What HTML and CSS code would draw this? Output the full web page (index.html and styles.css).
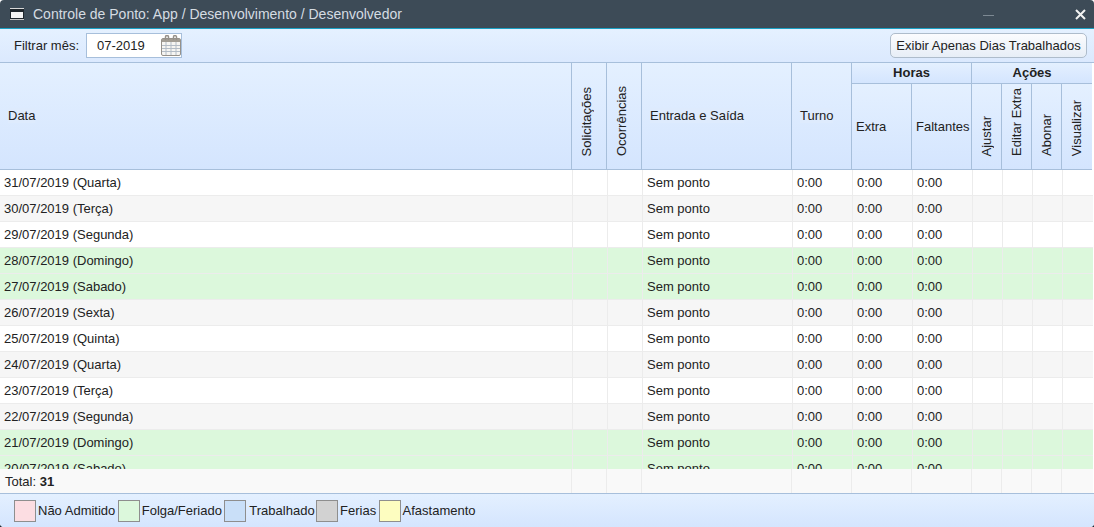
FILE: index.html
```html
<!DOCTYPE html>
<html lang="pt-BR">
<head>
    <meta charset="UTF-8">
    <title>Controle de Ponto</title>
    <link rel="stylesheet" href="styles.css">
</head>
<body>
<div class="window">
    <div class="titlebar">
        <svg class="title-icon" width="14" height="12" viewBox="0 0 14 12">
            <rect x="0" y="0" width="14" height="12" fill="#1f262c"/>
            <rect x="0" y="0" width="14" height="1" fill="#d8d8d8"/>
            <rect x="1" y="4" width="12" height="6" fill="#f4f4f4"/>
            <rect x="0" y="11" width="14" height="1" fill="#c4c4c4"/>
        </svg>
        <span class="title-text">Controle de Ponto: App / Desenvolvimento / Desenvolvedor</span>
        <span class="title-min"></span>
        <svg class="title-close" width="11" height="11" viewBox="0 0 11 11"><path d="M1 1 L10 10 M10 1 L1 10" stroke="#f2f2f2" stroke-width="2"/></svg>
    </div>

    <div class="toolbar">
        <label class="filter-label">Filtrar mês:</label>
        <div class="month-input">
            <span class="month-value">07-2019</span>
            <svg class="cal-icon" width="20" height="21" viewBox="0 0 20 21">
                <rect x="0.500" y="3.500" width="19" height="17" rx="1.500" fill="#f6f5f2" stroke="#96918a"/>
                <rect x="1" y="4" width="18" height="3" fill="#a29d94"/>
                <path d="M5 7v13M10 7v13M15 7v13M1 10.500h18M1 13.500h18M1 16.500h18" stroke="#b3bcc6" stroke-width="1"/>
                <path d="M4.500 5V2a1.500 1.500 0 0 1 3 0v3M12.500 5V2a1.500 1.500 0 0 1 3 0v3" fill="none" stroke="#96918a" stroke-width="1.500"/>
            </svg>
        </div>
        <button class="btn-days">Exibir Apenas Dias Trabalhados</button>
    </div>

    <table class="grid grid-head">
        <colgroup>
            <col class="c-data"><col class="c-v"><col class="c-v"><col class="c-es"><col class="c-h"><col class="c-h"><col class="c-h"><col class="c-a"><col class="c-a"><col class="c-a"><col class="c-end">
        </colgroup>
        <tr class="head-top">
            <th rowspan="2" class="th-left th-tall"><span class="lbl">Data</span></th>
            <th rowspan="2" class="th-rot"><span class="rot">Solicitações</span></th>
            <th rowspan="2" class="th-rot"><span class="rot">Ocorrências</span></th>
            <th rowspan="2" class="th-left th-tall"><span class="lbl">Entrada e Saída</span></th>
            <th rowspan="2" class="th-left th-tall"><span class="lbl">Turno</span></th>
            <th colspan="2" class="th-group">Horas</th>
            <th colspan="4" class="th-group th-end">Ações</th>
        </tr>
        <tr class="head-sub">
            <th class="th-left th-sm">Extra</th>
            <th class="th-left th-sm">Faltantes</th>
            <th class="th-rot"><span class="rot">Ajustar</span></th>
            <th class="th-rot"><span class="rot">Editar Extra</span></th>
            <th class="th-rot"><span class="rot">Abonar</span></th>
            <th class="th-rot th-end"><span class="rot">Visualizar</span></th>
        </tr>
    </table>

    <div class="rows">
        <table class="grid grid-body">
            <colgroup>
                <col class="c-data"><col class="c-v"><col class="c-v"><col class="c-es"><col class="c-h"><col class="c-h"><col class="c-h"><col class="c-a"><col class="c-a"><col class="c-a"><col class="c-last">
            </colgroup>
            <tr><td>31/07/2019 (Quarta)</td><td></td><td></td><td>Sem ponto</td><td>0:00</td><td>0:00</td><td>0:00</td><td></td><td></td><td></td><td></td></tr>
            <tr class="alt"><td>30/07/2019 (Terça)</td><td></td><td></td><td>Sem ponto</td><td>0:00</td><td>0:00</td><td>0:00</td><td></td><td></td><td></td><td></td></tr>
            <tr><td>29/07/2019 (Segunda)</td><td></td><td></td><td>Sem ponto</td><td>0:00</td><td>0:00</td><td>0:00</td><td></td><td></td><td></td><td></td></tr>
            <tr class="off"><td>28/07/2019 (Domingo)</td><td></td><td></td><td>Sem ponto</td><td>0:00</td><td>0:00</td><td>0:00</td><td></td><td></td><td></td><td></td></tr>
            <tr class="off"><td>27/07/2019 (Sabado)</td><td></td><td></td><td>Sem ponto</td><td>0:00</td><td>0:00</td><td>0:00</td><td></td><td></td><td></td><td></td></tr>
            <tr class="alt"><td>26/07/2019 (Sexta)</td><td></td><td></td><td>Sem ponto</td><td>0:00</td><td>0:00</td><td>0:00</td><td></td><td></td><td></td><td></td></tr>
            <tr><td>25/07/2019 (Quinta)</td><td></td><td></td><td>Sem ponto</td><td>0:00</td><td>0:00</td><td>0:00</td><td></td><td></td><td></td><td></td></tr>
            <tr class="alt"><td>24/07/2019 (Quarta)</td><td></td><td></td><td>Sem ponto</td><td>0:00</td><td>0:00</td><td>0:00</td><td></td><td></td><td></td><td></td></tr>
            <tr><td>23/07/2019 (Terça)</td><td></td><td></td><td>Sem ponto</td><td>0:00</td><td>0:00</td><td>0:00</td><td></td><td></td><td></td><td></td></tr>
            <tr class="alt"><td>22/07/2019 (Segunda)</td><td></td><td></td><td>Sem ponto</td><td>0:00</td><td>0:00</td><td>0:00</td><td></td><td></td><td></td><td></td></tr>
            <tr class="off"><td>21/07/2019 (Domingo)</td><td></td><td></td><td>Sem ponto</td><td>0:00</td><td>0:00</td><td>0:00</td><td></td><td></td><td></td><td></td></tr>
            <tr class="off"><td>20/07/2019 (Sabado)</td><td></td><td></td><td>Sem ponto</td><td>0:00</td><td>0:00</td><td>0:00</td><td></td><td></td><td></td><td></td></tr>
        </table>
    </div>

    <table class="grid grid-foot">
        <colgroup>
            <col class="c-data"><col class="c-v"><col class="c-v"><col class="c-es"><col class="c-h"><col class="c-h"><col class="c-h"><col class="c-a"><col class="c-a"><col class="c-a"><col class="c-last">
        </colgroup>
        <tr><td>Total: <b>31</b></td><td></td><td></td><td></td><td></td><td></td><td></td><td></td><td></td><td></td><td></td></tr>
    </table>

    <div class="legend">
        <span class="swatch sw-pink"></span><span class="legend-text">Não Admitido</span>
        <span class="swatch sw-green"></span><span class="legend-text">Folga/Feriado</span>
        <span class="swatch sw-blue"></span><span class="legend-text legend-tight">Trabalhado</span>
        <span class="swatch sw-gray"></span><span class="legend-text">Ferias</span>
        <span class="swatch sw-yellow"></span><span class="legend-text">Afastamento</span>
    </div>
</div>
</body>
</html>
```

FILE: styles.css
```css
html, body {
    margin: 0;
    padding: 0;
}

body {
    font-family: "Liberation Sans", Arial, sans-serif;
    font-size: 13px;
    color: #222;
    background: linear-gradient(to bottom, #fff 50%, #1d2a38 50%);
}

.window {
    width: 1094px;
    height: 527px;
    display: flex;
    flex-direction: column;
    overflow: hidden;
    background-color: #fff;
    border-radius: 4px;
}

.titlebar {
    height: 28px;
    flex: none;
    display: flex;
    align-items: center;
    padding-left: 10px;
    background-color: #3d4b57;
    border-bottom: 1px solid #1ba1c4;
}

.title-icon {
    margin-right: 9px;
}

.title-text {
    flex: 1;
    font-size: 14px;
    color: #d5dce2;
}

.title-min {
    width: 11px;
    height: 1px;
    margin-top: 2px;
    background-color: #7d8993;
    margin-right: 81px;
}

.title-close {
    margin-right: 8px;
}

.toolbar {
    height: 33px;
    flex: none;
    display: flex;
    align-items: center;
    padding: 0 7px 0 14px;
    background: linear-gradient(to bottom, #e5f1ff, #dbe9fe);
    border-bottom: 1px solid #a7bfdb;
}

.filter-label {
    margin-right: 7px;
}

.month-input {
    width: 96px;
    height: 25px;
    box-sizing: border-box;
    display: flex;
    align-items: center;
    justify-content: space-between;
    padding: 0 0 0 10px;
    background-color: #fff;
    border: 1px solid #a7bfdb;
}

.btn-days {
    margin-left: auto;
    width: 197px;
    height: 25px;
    padding: 0;
    font-family: inherit;
    font-size: 13px;
    color: #222;
    background: linear-gradient(to bottom, #fbfcfe, #e7eef7);
    border: 1px solid #aebccb;
    border-radius: 5px;
}

.grid {
    table-layout: fixed;
    width: 1093px;
    border-collapse: separate;
    border-spacing: 0;
}

.c-data { width: 572px; }
.c-v { width: 35px; }
.c-es { width: 150px; }
.c-h { width: 60px; }
.c-a { width: 30px; }
.c-end { width: 30px; }
.c-last { width: 31px; }

.grid-head {
    flex: none;
    width: 1092px;
    height: 107px;
}

.grid-head th {
    padding: 0;
    font-weight: normal;
    text-align: left;
    background: linear-gradient(to bottom, #e4f0ff, #d4e5fe);
    border-right: 1px solid #a7bfdb;
    border-bottom: 1px solid #a7bfdb;
}

.grid-head .th-end { border-right: none; }

.head-top { height: 21px; }

.grid-head .th-left { padding-left: 8px; }
.grid-head .th-sm { padding-left: 4px; }
.grid-head .th-tall { padding-bottom: 2px; }

.lbl {
    background-color: #deebfd;
}

.grid-head .th-group {
    text-align: center;
    font-weight: bold;
    padding-bottom: 2px;
}

.grid-head .th-rot {
    vertical-align: bottom;
    padding: 0 0 10px 8px;
}

.rot {
    display: inline-block;
    writing-mode: vertical-rl;
    transform: rotate(180deg);
    line-height: 13px;
}

.rows {
    height: 299px;
    flex: none;
    overflow: hidden;
}

.grid-body td {
    height: 25px;
    padding: 0 0 0 4px;
    border-left: 1px solid #ececec;
    border-bottom: 1px solid #ececec;
    white-space: nowrap;
}

.grid-body td:first-child {
    border-left: none;
}

.alt td { background-color: #f6f6f6; }
.off td { background-color: #dcf8dc; }

.grid-foot {
    flex: none;
    height: 24px;
}

.grid-foot td {
    padding: 0 0 0 5px;
    background-color: #f9f9f9;
    border-right: 1px solid #ececec;
}

.grid-foot td:last-child { border-right: none; }

.legend {
    flex: 1;
    display: flex;
    align-items: center;
    padding-left: 14px;
    background: linear-gradient(to bottom, #e4f0ff, #d4e5fe);
    border-top: 1px solid #a7bfdb;
}

.swatch {
    width: 20px;
    height: 20px;
    border: 1px solid #8e8e8e;
    margin-right: 2px;
}

.legend-text { margin-right: 2.4px; }
.legend-tight { margin-left: 1px; margin-right: 1.4px; }

.sw-pink { background-color: #fcdde2; }
.sw-green { background-color: #dcf8dc; }
.sw-blue { background-color: #c9dff8; }
.sw-gray { background-color: #d2d2d2; }
.sw-yellow { background-color: #fdfdc0; }
```
